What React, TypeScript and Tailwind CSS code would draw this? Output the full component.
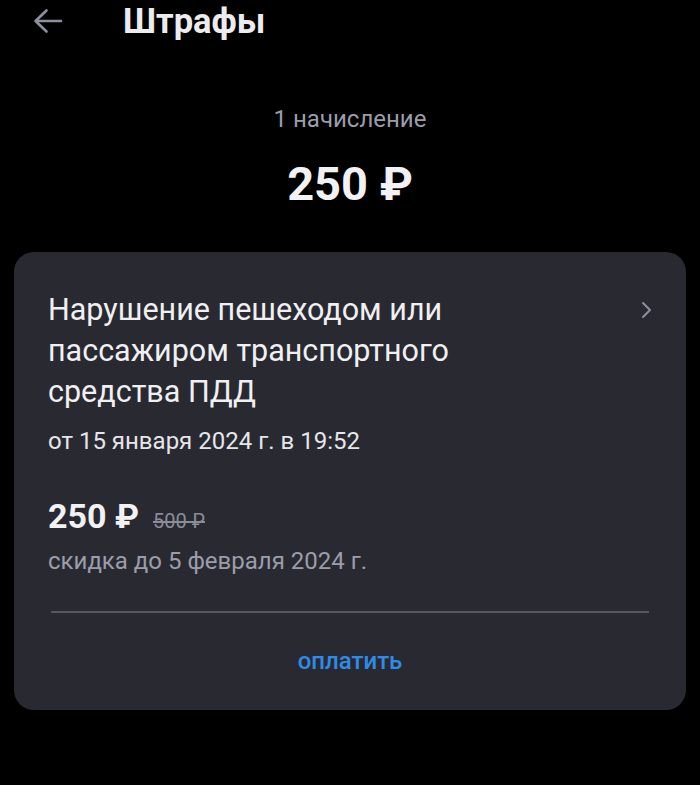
import React from "react";

export default function App() {
  return (
    <div className="w-[700px] h-[785px] bg-black overflow-hidden" style={{ fontFamily: "Roboto, 'Noto Sans', sans-serif" }}>
      <div className="h-[42px] flex items-center">
        <div className="w-[123px] flex items-center pl-[33px]">
          <svg width="30" height="26" viewBox="0 0 30 26" fill="none" stroke="#8d909c" strokeWidth="2.6" strokeLinecap="round" strokeLinejoin="round">
            <path d="M28 13H2.5M13.5 2.5L2.5 13l11 10.5" />
          </svg>
        </div>
        <div className="text-[34.5px] font-bold text-[#ececef] leading-none">Штрафы</div>
      </div>
      <div className="mt-[65px] text-center text-[24px] text-[#9b9daa] leading-none">1 начисление</div>
      <div className="mt-[29px] text-center text-[47px] font-bold text-[#f2f2f4] leading-none">250 ₽</div>
      <div className="mt-[45px] mx-[14px] rounded-[20px] bg-[#292a31] pt-[37px] pb-[37px]">
        <div className="flex justify-between pl-[34px] pr-[34px]">
          <div className="text-[30.5px] leading-[41px] text-[#f0f0f2] w-[480px]">Нарушение пешеходом или пассажиром транспортного средства ПДД</div>
          <svg className="mt-[11px]" width="12" height="20" viewBox="0 0 12 20" fill="none" stroke="#8d909c" strokeWidth="2" strokeLinecap="round" strokeLinejoin="round">
            <path d="M3 3l7 7-7 7" />
          </svg>
        </div>
        <div className="pl-[34px] mt-[17px] text-[24px] leading-none text-[#e6e6ea]">от 15 января 2024 г. в 19:52</div>
        <div className="pl-[34px] mt-[46px] flex items-baseline gap-[14px]">
          <span className="text-[34px] font-bold text-[#f2f2f4] leading-none">250 ₽</span>
          <span className="text-[20px] text-[#8a8c98] line-through leading-none">500 ₽</span>
        </div>
        <div className="pl-[34px] mt-[16px] text-[24px] leading-none text-[#9b9daa]">скидка до 5 февраля 2024 г.</div>
        <div className="mx-[37px] mt-[38px] h-[2px] bg-[#56575f]" />
        <div className="mt-[36px] text-center text-[24px] font-medium text-[#2f8be8] leading-none">оплатить</div>
      </div>
    </div>
  );
}
